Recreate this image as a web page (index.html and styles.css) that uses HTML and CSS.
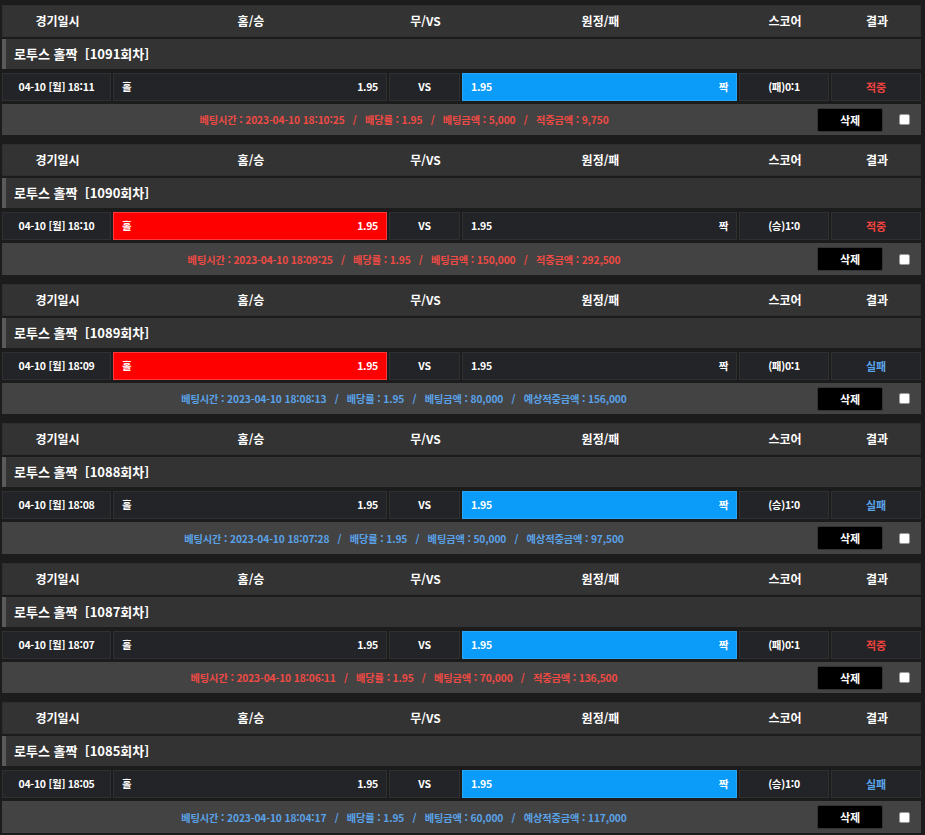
FILE: index.html
```html
<!DOCTYPE html>
<html lang="ko">
<head>
<meta charset="utf-8">
<title>베팅내역</title>
<link rel="stylesheet" href="styles.css">
</head>
<body>
<div class="list">

  <section class="bet">
    <div class="grid head"><div>경기일시</div><div>홈/승</div><div>무/VS</div><div>원정/패</div><div>스코어</div><div>결과</div></div>
    <div class="title">로투스 홀짝 &nbsp;[1091회차]</div>
    <div class="grid row">
      <div class="cell date">04-10 [월] 18:11</div>
      <div class="cell pick"><span>홀</span><span>1.95</span></div>
      <div class="cell vs">VS</div>
      <div class="cell pick sel-blue"><span>1.95</span><span>짝</span></div>
      <div class="cell score">(패)0:1</div>
      <div class="cell result win">적중</div>
    </div>
    <div class="info">
      <div class="info-text win">베팅시간 : 2023-04-10 18:10:25 &nbsp; / &nbsp; 배당률 : 1.95 &nbsp; / &nbsp; 베팅금액 : 5,000 &nbsp; / &nbsp; 적중금액 : 9,750</div>
      <button class="del">삭제</button>
      <input class="chk" type="checkbox">
    </div>
  </section>

  <section class="bet">
    <div class="grid head"><div>경기일시</div><div>홈/승</div><div>무/VS</div><div>원정/패</div><div>스코어</div><div>결과</div></div>
    <div class="title">로투스 홀짝 &nbsp;[1090회차]</div>
    <div class="grid row">
      <div class="cell date">04-10 [월] 18:10</div>
      <div class="cell pick sel-red"><span>홀</span><span>1.95</span></div>
      <div class="cell vs">VS</div>
      <div class="cell pick"><span>1.95</span><span>짝</span></div>
      <div class="cell score">(승)1:0</div>
      <div class="cell result win">적중</div>
    </div>
    <div class="info">
      <div class="info-text win">베팅시간 : 2023-04-10 18:09:25 &nbsp; / &nbsp; 배당률 : 1.95 &nbsp; / &nbsp; 베팅금액 : 150,000 &nbsp; / &nbsp; 적중금액 : 292,500</div>
      <button class="del">삭제</button>
      <input class="chk" type="checkbox">
    </div>
  </section>

  <section class="bet">
    <div class="grid head"><div>경기일시</div><div>홈/승</div><div>무/VS</div><div>원정/패</div><div>스코어</div><div>결과</div></div>
    <div class="title">로투스 홀짝 &nbsp;[1089회차]</div>
    <div class="grid row">
      <div class="cell date">04-10 [월] 18:09</div>
      <div class="cell pick sel-red"><span>홀</span><span>1.95</span></div>
      <div class="cell vs">VS</div>
      <div class="cell pick"><span>1.95</span><span>짝</span></div>
      <div class="cell score">(패)0:1</div>
      <div class="cell result lose">실패</div>
    </div>
    <div class="info">
      <div class="info-text lose">베팅시간 : 2023-04-10 18:08:13 &nbsp; / &nbsp; 배당률 : 1.95 &nbsp; / &nbsp; 베팅금액 : 80,000 &nbsp; / &nbsp; 예상적중금액 : 156,000</div>
      <button class="del">삭제</button>
      <input class="chk" type="checkbox">
    </div>
  </section>

  <section class="bet">
    <div class="grid head"><div>경기일시</div><div>홈/승</div><div>무/VS</div><div>원정/패</div><div>스코어</div><div>결과</div></div>
    <div class="title">로투스 홀짝 &nbsp;[1088회차]</div>
    <div class="grid row">
      <div class="cell date">04-10 [월] 18:08</div>
      <div class="cell pick"><span>홀</span><span>1.95</span></div>
      <div class="cell vs">VS</div>
      <div class="cell pick sel-blue"><span>1.95</span><span>짝</span></div>
      <div class="cell score">(승)1:0</div>
      <div class="cell result lose">실패</div>
    </div>
    <div class="info">
      <div class="info-text lose">베팅시간 : 2023-04-10 18:07:28 &nbsp; / &nbsp; 배당률 : 1.95 &nbsp; / &nbsp; 베팅금액 : 50,000 &nbsp; / &nbsp; 예상적중금액 : 97,500</div>
      <button class="del">삭제</button>
      <input class="chk" type="checkbox">
    </div>
  </section>

  <section class="bet">
    <div class="grid head"><div>경기일시</div><div>홈/승</div><div>무/VS</div><div>원정/패</div><div>스코어</div><div>결과</div></div>
    <div class="title">로투스 홀짝 &nbsp;[1087회차]</div>
    <div class="grid row">
      <div class="cell date">04-10 [월] 18:07</div>
      <div class="cell pick"><span>홀</span><span>1.95</span></div>
      <div class="cell vs">VS</div>
      <div class="cell pick sel-blue"><span>1.95</span><span>짝</span></div>
      <div class="cell score">(패)0:1</div>
      <div class="cell result win">적중</div>
    </div>
    <div class="info">
      <div class="info-text win">베팅시간 : 2023-04-10 18:06:11 &nbsp; / &nbsp; 배당률 : 1.95 &nbsp; / &nbsp; 베팅금액 : 70,000 &nbsp; / &nbsp; 적중금액 : 136,500</div>
      <button class="del">삭제</button>
      <input class="chk" type="checkbox">
    </div>
  </section>

  <section class="bet">
    <div class="grid head"><div>경기일시</div><div>홈/승</div><div>무/VS</div><div>원정/패</div><div>스코어</div><div>결과</div></div>
    <div class="title">로투스 홀짝 &nbsp;[1085회차]</div>
    <div class="grid row">
      <div class="cell date">04-10 [월] 18:05</div>
      <div class="cell pick"><span>홀</span><span>1.95</span></div>
      <div class="cell vs">VS</div>
      <div class="cell pick sel-blue"><span>1.95</span><span>짝</span></div>
      <div class="cell score">(승)1:0</div>
      <div class="cell result lose">실패</div>
    </div>
    <div class="info">
      <div class="info-text lose">베팅시간 : 2023-04-10 18:04:17 &nbsp; / &nbsp; 배당률 : 1.95 &nbsp; / &nbsp; 베팅금액 : 60,000 &nbsp; / &nbsp; 예상적중금액 : 117,000</div>
      <button class="del">삭제</button>
      <input class="chk" type="checkbox">
    </div>
  </section>

</div>
</body>
</html>
```

FILE: styles.css
```css
* { box-sizing: border-box; }

html, body {
  margin: 0;
  background: #1c1c1c;
}

body {
  padding: 5px 0 0 2px;
  font-family: "Noto Sans CJK KR", "Noto Sans", sans-serif;
  font-weight: 700;
  color: #fff;
}

.list {
  width: 919px;
}

.bet {
  margin-bottom: 9px;
}

.bet:nth-child(even) .info {
  height: 32px;
}

.grid {
  display: grid;
  grid-template-columns: 109px 274px 71px 275px 90px 90px;
  column-gap: 2px;
}

.head {
  height: 32px;
  margin-bottom: 2px;
  background: #333333;
  border: 1px solid #2e2e2e;
  font-size: 12px;
  line-height: 30px;
  text-align: center;
}

.title {
  height: 30px;
  margin-bottom: 4px;
  background: #333333;
  border-left: 4px solid #5a5a5a;
  padding-left: 8px;
  font-size: 13px;
  line-height: 30px;
}

.row {
  height: 28px;
  margin-bottom: 3px;
}

.cell {
  background: #232427;
  border: 1px solid #2f3032;
  font-size: 10.5px;
  letter-spacing: -0.3px;
  line-height: 26px;
  text-align: center;
}

.pick {
  display: flex;
  justify-content: space-between;
  padding: 0 8px;
}

.sel-blue {
  background: #0a9cf8;
  border-color: #2aa8f8;
}

.sel-red {
  background: #ff0000;
  border-color: #ff3a3a;
}

.result {
  font-size: 11px;
  letter-spacing: 0;
}

.result.win { color: #f0433f; }
.result.lose { color: #5aa5ea; }

.info {
  display: flex;
  align-items: center;
  height: 31px;
  background: #434343;
}

.info-text {
  flex: 0 0 804px;
  text-align: center;
  font-size: 10.2px;
  letter-spacing: -0.1px;
  white-space: nowrap;
}

.info-text.win { color: #f04a44; }
.info-text.lose { color: #5aa2e8; }

.del {
  width: 66px;
  height: 24px;
  margin-left: 11px;
  background: #000;
  border: 1px solid #333;
  border-radius: 2px;
  color: #fff;
  font-family: inherit;
  font-weight: 700;
  font-size: 11px;
  padding: 0;
}

.chk {
  appearance: none;
  -webkit-appearance: none;
  width: 11px;
  height: 11px;
  margin: 0 0 0 16px;
  background: #fff;
  border: 1px solid #9a9a9a;
  border-radius: 2px;
}
```
